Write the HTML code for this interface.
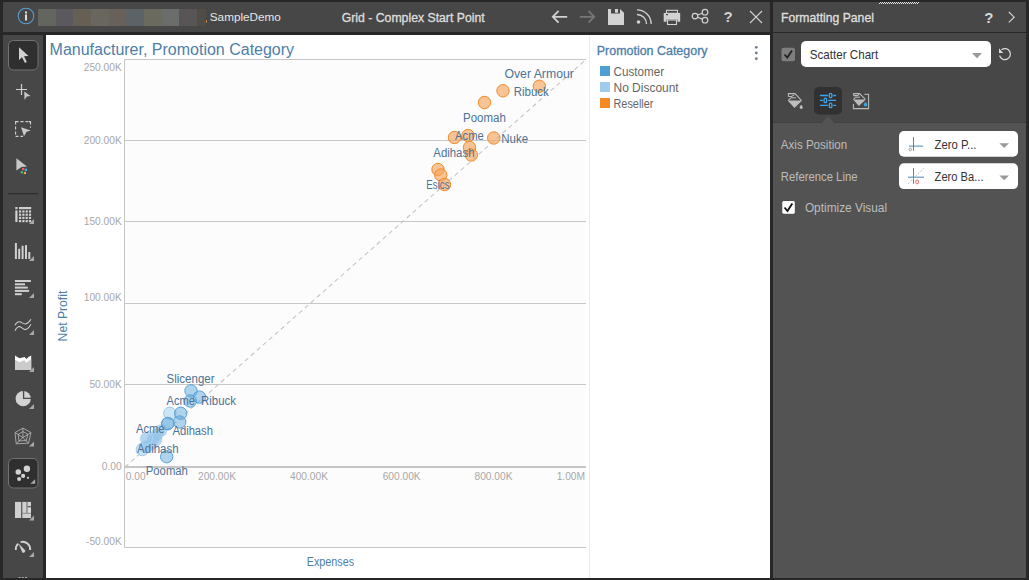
<!DOCTYPE html>
<html>
<head>
<meta charset="utf-8">
<style>
html,body{margin:0;padding:0;}
body{width:1029px;height:580px;overflow:hidden;background:#272727;position:relative;font-family:"Liberation Sans",sans-serif;}
.abs{position:absolute;}
#hdr{left:3px;top:2px;width:767px;height:30px;background:#474747;}
#phdr{left:773px;top:2px;width:253px;height:30px;background:#474747;}
#pbody1{left:773px;top:33px;width:253px;height:90px;background:#474747;}
#pbody2{left:773px;top:123px;width:253px;height:455px;background:#535353;}
#tool{left:3px;top:35px;width:40px;height:543px;background:#474747;}
#content{left:46px;top:35px;width:724px;height:543px;background:#ffffff;}
svg{position:absolute;left:0;top:0;}
</style>
</head>
<body>
<div class="abs" id="hdr"></div>
<div class="abs" id="phdr"></div>
<div class="abs" id="pbody1"></div>
<div class="abs" id="pbody2"></div>
<div class="abs" id="tool"></div>
<div class="abs" id="content"></div>
<svg width="1029" height="580" viewBox="0 0 1029 580" font-family="Liberation Sans, sans-serif">
<!-- ============ HEADER ============ -->
<circle cx="26" cy="16" r="7.8" fill="none" stroke="#5b9fd2" stroke-width="1.05"/>
<rect x="25" y="11.5" width="2" height="2" fill="#e0e0e0"/>
<rect x="25" y="14.5" width="2" height="6" fill="#e0e0e0"/>
<g>
<rect x="38" y="9" width="18" height="17" fill="#63665f"/>
<rect x="56" y="9" width="17" height="17" fill="#5b595d"/>
<rect x="73" y="9" width="18" height="17" fill="#656053"/>
<rect x="91" y="9" width="18" height="17" fill="#69665f"/>
<rect x="109" y="9" width="17" height="17" fill="#67615a"/>
<rect x="126" y="9" width="18" height="17" fill="#5b6366"/>
<rect x="144" y="9" width="18" height="17" fill="#6a6a5e"/>
<rect x="162" y="9" width="17" height="17" fill="#6b6d6b"/>
<rect x="179" y="9" width="18" height="17" fill="#595455"/>
<rect x="197" y="9" width="9" height="17" fill="#504c46"/>
<rect x="206" y="20" width="1" height="1" fill="#c8553a"/><rect x="206" y="21" width="1" height="1.3" fill="#d8b43a"/>
</g>
<text x="209.8" y="20.9" font-size="11.7" fill="#e6e6e6" textLength="71" lengthAdjust="spacingAndGlyphs">SampleDemo</text>
<text x="341.7" y="22" font-size="12.5" fill="#dcdcdc" stroke="#dcdcdc" stroke-width="0.35" textLength="143" lengthAdjust="spacingAndGlyphs">Grid - Complex Start Point</text>

<!-- back arrow -->
<path d="M552.8 16.8 H567.2 M558.6 10.9 L552.8 16.8 L558.6 22.7" fill="none" stroke="#d2d2d2" stroke-width="1.8"/>
<!-- forward arrow -->
<path d="M579.8 16.8 H594.2 M588.4 10.9 L594.2 16.8 L588.4 22.7" fill="none" stroke="#777777" stroke-width="1.8"/>
<!-- save -->
<path d="M608 9 H611 V13.6 H620 V9 L624 12.8 V25 H608 Z" fill="#d2d2d2"/>
<rect x="615" y="9" width="3" height="3.7" fill="#d2d2d2"/>
<!-- rss -->
<circle cx="638.5" cy="22" r="1.8" fill="#d2d2d2"/>
<path d="M637 14.5 A9.5 9.5 0 0 1 646.5 24" fill="none" stroke="#d2d2d2" stroke-width="1.3"/>
<path d="M637 9.8 A14.2 14.2 0 0 1 651.2 24" fill="none" stroke="#d2d2d2" stroke-width="1.3"/>
<!-- print -->
<rect x="666.5" y="10.3" width="11" height="3" fill="none" stroke="#d2d2d2" stroke-width="1.1"/>
<path d="M663.7 13 H680.2 V21.8 H677.5 V19.5 H666.5 V21.8 H663.7 Z" fill="#d2d2d2"/>
<rect x="667.5" y="20" width="9" height="4.5" fill="none" stroke="#d2d2d2" stroke-width="1.1"/>
<rect x="666" y="14" width="2" height="1.2" fill="#474747"/>
<!-- share -->
<g fill="none" stroke="#d2d2d2" stroke-width="1.2">
<circle cx="695" cy="16.1" r="2.8"/>
<circle cx="705" cy="12.2" r="2.8"/>
<circle cx="705" cy="20.2" r="2.8"/>
<path d="M697.6 15 L702.4 13.2 M697.6 17.2 L702.4 19.1"/>
</g>
<!-- help -->
<text x="723.6" y="22.2" font-size="15" font-weight="bold" fill="#d2d2d2">?</text>
<!-- close -->
<path d="M750 11 L762 23 M762 11 L750 23" stroke="#d2d2d2" stroke-width="1.1" fill="none"/>

<!-- ============ PANEL HEADER ============ -->
<text x="781.1" y="22.1" font-size="13" fill="#dedede" stroke="#dedede" stroke-width="0.35" textLength="92.8" lengthAdjust="spacingAndGlyphs">Formatting Panel</text>
<text x="984.3" y="23.1" font-size="15" font-weight="bold" fill="#d8d8d8">?</text>
<path d="M1008.8 12 L1014.2 17.2 L1008.8 22.4" fill="none" stroke="#d8d8d8" stroke-width="1.1"/>
<!-- zigzag -->
<g fill="#e8e8e8">
<rect x="879" y="2" width="40" height="1" fill="url(#zz1)"/>
<rect x="879" y="3" width="40" height="1" fill="url(#zz2)"/>
</g>
<defs>
<pattern id="zz1" width="2" height="1" patternUnits="userSpaceOnUse"><rect x="0" y="0" width="1" height="1" fill="#e8e8e8"/></pattern>
<pattern id="zz2" width="2" height="1" patternUnits="userSpaceOnUse"><rect x="1" y="0" width="1" height="1" fill="#e8e8e8"/></pattern>
</defs>

<!-- ============ PANEL BODY ============ -->
<rect x="781.5" y="47.7" width="13.5" height="13.5" rx="2" fill="#7e7e7e"/>
<path d="M784.5 54.5 L787.3 57.5 L792 50.5" fill="none" stroke="#222" stroke-width="1.8"/>
<rect x="801" y="41" width="190" height="26" rx="5" fill="#ffffff"/>
<text x="809.8" y="58.6" font-size="12.6" fill="#333333" textLength="68.4" lengthAdjust="spacingAndGlyphs">Scatter Chart</text>
<path d="M972 53 H982 L977 58.2 Z" fill="#999999"/>
<!-- refresh -->
<path d="M999.6 55.6 A5.5 5.5 0 1 0 1001.6 49.7" fill="none" stroke="#d8d8d8" stroke-width="1.3"/>
<path d="M999 48.3 L999 52.9 L1003.2 52.9 Z" fill="#d8d8d8"/>

<!-- tabs -->
<rect x="814" y="87" width="28" height="27.5" rx="5" fill="#313131"/>
<path d="M822 123 L828 116.3 L834 123 Z" fill="#535353"/>
<rect x="773" y="122" width="253" height="1" fill="#414141"/>
<path d="M821.5 123.2 L828 116.3 L834.5 123.2 Z" fill="#535353"/>
<!-- sliders icon -->
<g stroke="#41a5ee" stroke-width="1.3" fill="none">
<path d="M819.9 95.5 H827.9 M833.3 95.5 H836.1"/>
<path d="M819.9 100.4 H822.8 M828.2 100.4 H836.1"/>
<path d="M819.9 105.4 H827.9 M833.3 105.4 H836.1"/>
<rect x="829.3" y="93.4" width="2.6" height="4.3" rx="1.2"/>
<rect x="824.1" y="98.2" width="2.6" height="4.4" rx="1.2"/>
<rect x="829.3" y="103.2" width="2.6" height="4.5" rx="1.2"/>
</g>
<!-- paint bucket icon 1 -->
<g fill="none" stroke="#bdbdbd" stroke-width="1.05">
<path d="M788.4 96.4 V93.6 H795 L801.6 100.6"/>
<path d="M788.4 96.4 H791.5 L794.3 94.9"/>
<path d="M791 97.8 H795.8"/>
<path d="M790.9 97.8 L788.2 100.6"/>
</g>
<path d="M787.6 100.6 H802.1 L794.5 108.1 Z" fill="#bdbdbd"/>
<path d="M801.2 104.8 C800.2 106 799.6 106.6 799.6 107.3 A1.6 1.6 0 0 0 802.8 107.3 C802.8 106.6 802.2 106 801.2 104.8 Z" fill="#bdbdbd"/>
<!-- paint bucket icon 2 -->
<g fill="none" stroke="#bdbdbd" stroke-width="1.05">
<path d="M853.6 95.6 V93.6 H859.6 L865.4 99.3"/>
<path d="M853.6 95.6 H857 L859.2 94.5"/>
<path d="M855.5 97.2 H860"/>
<path d="M855.5 97.2 L853.4 99.5"/>
<path d="M864.4 94.3 H868.6 V108.6 H853.4 V104.1"/>
</g>
<path d="M853.1 99.6 H865.8 L858.8 106 Z" fill="#bdbdbd"/>
<path d="M865.5 101.9 C864.4 103.2 863.8 103.9 863.8 104.7 A1.75 1.75 0 0 0 867.3 104.7 C867.3 103.9 866.6 103.2 865.5 101.9 Z" fill="#3ea3ea"/>

<!-- rows -->
<text x="780.8" y="148.8" font-size="12.5" fill="#bdbdbd" textLength="66.3" lengthAdjust="spacingAndGlyphs">Axis Position</text>
<text x="780.8" y="181" font-size="12.5" fill="#bdbdbd" textLength="76.7" lengthAdjust="spacingAndGlyphs">Reference Line</text>
<rect x="899" y="131" width="119" height="25.7" rx="5" fill="#ffffff"/>
<rect x="899" y="163.3" width="119" height="25.8" rx="5" fill="#ffffff"/>
<text x="934.6" y="148.8" font-size="12.5" fill="#333333" textLength="41.9" lengthAdjust="spacingAndGlyphs">Zero P...</text>
<text x="934.6" y="180.5" font-size="12.5" fill="#333333" textLength="48.9" lengthAdjust="spacingAndGlyphs">Zero Ba...</text>
<path d="M999.4 143.2 H1009 L1004.2 148.1 Z" fill="#999999"/>
<path d="M999.4 175.4 H1009 L1004.2 180.3 Z" fill="#999999"/>
<g stroke="#4f85b0" stroke-width="1" fill="none">
<path d="M913.5 137.2 V150.8 M908.9 146.1 H923.1"/>
<path d="M913.5 168 V183.8 M908 177.2 H924"/>
</g>
<circle cx="910.3" cy="149.5" r="1.3" fill="none" stroke="#888" stroke-width="0.8"/>
<path d="M908 184 L924 168" stroke="#bbbbbb" stroke-width="0.9" stroke-dasharray="2 1.5"/>
<rect x="915.8" y="180.1" width="2.6" height="3.6" rx="1" fill="none" stroke="#e54545" stroke-width="0.8"/>

<rect x="781.8" y="200.5" width="13.5" height="13.8" rx="2" fill="#ffffff" stroke="#333" stroke-width="0.8"/>
<path d="M784.5 207.5 L787.5 211 L792.3 203.5" fill="none" stroke="#111" stroke-width="1.8"/>
<text x="804.9" y="212.1" font-size="12.5" fill="#bdbdbd" textLength="82.2" lengthAdjust="spacingAndGlyphs">Optimize Visual</text>


<!-- ============ CHART ============ -->
<text x="49.6" y="55" font-size="16" fill="#4d7ea8" textLength="244.5" lengthAdjust="spacingAndGlyphs">Manufacturer, Promotion Category</text>
<rect x="125" y="60" width="461" height="487" fill="#fcfcfc"/>
<path d="M586 59.5 H124.5 V547.5 H586" fill="none" stroke="#c6c6c6" stroke-width="1"/>
<g stroke="#c8c8c8" stroke-width="1">
<path d="M125 140.5 H586 M125 221.5 H586 M125 303.5 H586 M125 384.5 H586"/>
</g>
<rect x="125" y="466" width="461" height="2" fill="#c6c6c6"/>
<path d="M125 467 L585.5 60" stroke="#c4c4c4" stroke-width="1.05" stroke-dasharray="4.5 3.5" fill="none"/>
<g font-size="10.2" fill="#a8a8a8" text-anchor="end">
<text x="121.7" y="71">250.00K</text>
<text x="121.7" y="143.8">200.00K</text>
<text x="121.7" y="224.8">150.00K</text>
<text x="121.7" y="301">100.00K</text>
<text x="121.7" y="388">50.00K</text>
<text x="121.7" y="470.1">0.00</text>
<text x="121.7" y="544.8">-50.00K</text>
</g>
<g font-size="10.2" fill="#a8a8a8" text-anchor="middle">
<text x="125.8" y="479.8" text-anchor="start">0.00</text>
<text x="217" y="479.8">200.00K</text>
<text x="309" y="479.8">400.00K</text>
<text x="401.7" y="479.8">600.00K</text>
<text x="493.5" y="479.8">800.00K</text>
<text x="585" y="479.8" text-anchor="end">1.00M</text>
</g>
<text x="306.7" y="566" font-size="12" fill="#4d7ea8" textLength="47.5" lengthAdjust="spacingAndGlyphs">Expenses</text>
<text transform="translate(67.1 341.4) rotate(-90)" x="0" y="0" font-size="12.5" fill="#4d7ea8" textLength="50.7" lengthAdjust="spacingAndGlyphs">Net Profit</text>
<line x1="589.5" y1="35" x2="589.5" y2="578" stroke="#ececec" stroke-width="1"/>

<!-- orange points -->
<g fill="#f6a65f" fill-opacity="0.65" stroke="#f18b2a" stroke-width="1">
<circle cx="539.3" cy="86.3" r="6.2"/>
<circle cx="503" cy="90.8" r="6.2"/>
<circle cx="484.5" cy="102.5" r="6.2"/>
<circle cx="454.5" cy="137.5" r="6.2"/>
<circle cx="468" cy="135.5" r="6.2"/>
<circle cx="493.8" cy="138" r="6.2"/>
<circle cx="469.5" cy="147.5" r="6.2"/>
<circle cx="471.3" cy="155" r="6.2"/>
<circle cx="438" cy="169.5" r="6.2"/>
<circle cx="440.8" cy="175" r="6.2"/>
<circle cx="444.5" cy="184.5" r="6.2"/>
</g>
<!-- blue points -->
<g fill="#a6d0ee" fill-opacity="0.55" stroke="#9cc9ea" stroke-width="1">
<circle cx="169.8" cy="413.3" r="6.2"/>
<circle cx="142.4" cy="449.5" r="6.2"/>
</g>
<g fill="#94c5ea" fill-opacity="0.7" stroke="none">
<circle cx="161" cy="430.5" r="6.2"/>
<circle cx="157" cy="434.5" r="6.2"/>
<circle cx="153.3" cy="438.6" r="6.2"/>
<circle cx="146.5" cy="438.5" r="6.2"/>
<circle cx="156" cy="440" r="6.2"/>
<circle cx="150" cy="445" r="6.2"/>
<circle cx="145" cy="447" r="6.2"/>
</g>
<g fill="none" stroke="#b3d6f0" stroke-width="0.8">
<circle cx="146.5" cy="438.5" r="6.2"/>
</g>
<g fill="#62aadb" fill-opacity="0.5" stroke="#5aa3d6" stroke-width="1">
<circle cx="191" cy="390.9" r="6.2"/>
<circle cx="199.5" cy="397.1" r="6.2"/>
<circle cx="190.2" cy="401" r="6.2"/>
<circle cx="180.7" cy="413.3" r="6.2"/>
<circle cx="179.7" cy="422" r="6.2"/>
<circle cx="167.8" cy="423.6" r="6.2"/>
<circle cx="167.8" cy="423.6" r="6.2" fill-opacity="0.3"/>
<circle cx="166.7" cy="456.7" r="6.2"/>
</g>
<!-- labels -->
<g font-size="12" fill="#4e7294" lengthAdjust="spacingAndGlyphs">
<text x="504.5" y="78" textLength="69.3" lengthAdjust="spacingAndGlyphs">Over Armour</text>
<text x="513.8" y="95.5" textLength="35" lengthAdjust="spacingAndGlyphs">Ribuck</text>
<text x="463" y="122" textLength="42.8" lengthAdjust="spacingAndGlyphs">Poomah</text>
<text x="455" y="139.5" textLength="28.8" lengthAdjust="spacingAndGlyphs">Acme</text>
<text x="501.3" y="143" textLength="26.7" lengthAdjust="spacingAndGlyphs">Nuke</text>
<text x="433.3" y="157" textLength="41.2" lengthAdjust="spacingAndGlyphs">Adihash</text>
<text x="426.3" y="188.8" textLength="23.2" lengthAdjust="spacingAndGlyphs">Esics</text>
<text x="166.6" y="383.1" textLength="47.9" lengthAdjust="spacingAndGlyphs">Slicenger</text>
<text x="166.6" y="404.8" textLength="28.3" lengthAdjust="spacingAndGlyphs">Acme</text>
<text x="201.1" y="405" textLength="34.9" lengthAdjust="spacingAndGlyphs">Ribuck</text>
<text x="135.9" y="432.8" textLength="28.7" lengthAdjust="spacingAndGlyphs">Acme</text>
<text x="172.4" y="434.7" textLength="40.6" lengthAdjust="spacingAndGlyphs">Adihash</text>
<text x="137.1" y="452.7" textLength="41.5" lengthAdjust="spacingAndGlyphs">Adihash</text>
<text x="145.8" y="475.4" textLength="42.1" lengthAdjust="spacingAndGlyphs">Poomah</text>
</g>

<!-- legend -->
<text x="596.8" y="55.2" font-size="12" fill="#4d7ea8" stroke="#4d7ea8" stroke-width="0.3" textLength="110.7" lengthAdjust="spacingAndGlyphs">Promotion Category</text>
<g fill="#6c7e92">
<circle cx="756.3" cy="47.3" r="1.4"/>
<circle cx="756.3" cy="53" r="1.4"/>
<circle cx="756.3" cy="58.7" r="1.4"/>
</g>
<rect x="600" y="66" width="10" height="10" fill="#4d9fd2"/>
<rect x="600" y="82" width="10" height="10" fill="#9fcbec"/>
<rect x="600" y="98" width="10" height="10" fill="#f58a24"/>
<g font-size="12" fill="#666666">
<text x="613.5" y="76" textLength="50.6" lengthAdjust="spacingAndGlyphs">Customer</text>
<text x="613.5" y="92" textLength="65.2" lengthAdjust="spacingAndGlyphs">No Discount</text>
<text x="613.5" y="108" textLength="39.9" lengthAdjust="spacingAndGlyphs">Reseller</text>
</g>

<!-- ============ TOOLBAR ============ -->
<rect x="8.5" y="40.5" width="29.5" height="29.5" rx="5" fill="#2f2f2f" stroke="#727272" stroke-width="1"/>
<path d="M19 47.3 V60 L22 57.3 L25 63 L26.8 62 L24 56.3 L28.5 56 Z" fill="#d0d0d0"/>


<!-- add -->
<path d="M21.5 84 V95 M16 89.5 H27" stroke="#d0d0d0" stroke-width="1.2" fill="none"/>
<path d="M24.2 91.5 L30.6 96 L26.8 96.6 L24.6 100 Z" fill="#c8c8c8"/>
<!-- dashed select -->
<path d="M15.6 124.5 V121.6 H18.5 M20.5 121.6 H23.5 M25.5 121.6 H28 M30.5 121.6 H30.5 V124.5 M15.6 126.5 V129.5 M15.6 131.5 V134.5 M15.6 136.4 H18.5 M20.5 136.4 H23 M30.5 126.5 V127.8" fill="none" stroke="#d0d0d0" stroke-width="1.1"/>
<path d="M30.5 121.6 H28.5 M30.5 121.6 V124" fill="none" stroke="#d0d0d0" stroke-width="1.1"/>
<path d="M21 127.3 L30.7 130.5 L26.6 131.8 L24 136.3 Z" fill="#c8c8c8"/>
<!-- color cursor -->
<path d="M16.4 158.3 L27 166.5 L21.5 167 L16.4 170.6 Z" fill="#c8c8c8"/>
<rect x="22" y="168" width="2.2" height="2.2" fill="#f0605a"/>
<rect x="24.8" y="168.7" width="2.2" height="2.2" fill="#4ab3f0"/>
<rect x="20.7" y="171.1" width="2.2" height="2.2" fill="#2fc889"/>
<rect x="23.8" y="171.9" width="2.2" height="2.2" fill="#f5a84a"/>
<!-- separator -->
<rect x="8" y="193" width="30" height="1.2" fill="#2c2c2c"/>
<!-- grid icon -->
<g fill="#d0d0d0">
<rect x="15.3" y="207" width="2.2" height="2.2"/>
<rect x="19" y="207" width="12.2" height="2.2"/>
<rect x="15.3" y="210.4" width="2.2" height="11.6"/>
<rect x="19" y="210.4" width="2.2" height="2.2"/><rect x="22.3" y="210.4" width="2.2" height="2.2"/><rect x="25.6" y="210.4" width="2.2" height="2.2"/><rect x="28.9" y="210.4" width="2.2" height="2.2"/>
<rect x="19" y="213.6" width="2.2" height="2.2"/><rect x="22.3" y="213.6" width="2.2" height="2.2"/><rect x="25.6" y="213.6" width="2.2" height="2.2"/><rect x="28.9" y="213.6" width="2.2" height="2.2"/>
<rect x="19" y="216.8" width="2.2" height="2.2"/><rect x="22.3" y="216.8" width="2.2" height="2.2"/><rect x="25.6" y="216.8" width="2.2" height="2.2"/><rect x="28.9" y="216.8" width="2.2" height="2.2"/>
<rect x="19" y="220" width="2.2" height="2.2"/><rect x="22.3" y="220" width="2.2" height="2.2"/><rect x="25.6" y="220" width="2.2" height="2.2"/><rect x="28.9" y="220" width="2.2" height="2.2"/>
</g>
<path d="M34 219 V224 H29 Z" fill="#a8a8a8"/>
<!-- bar icon -->
<g fill="#d0d0d0">
<rect x="14.9" y="243" width="2" height="16"/>
<rect x="18.2" y="248.8" width="2" height="10.2"/>
<rect x="21.6" y="245.8" width="2" height="13.2"/>
<rect x="25" y="245.1" width="2" height="13.9"/>
<rect x="28.3" y="252" width="2" height="7"/>
</g>
<path d="M34 256 V261 H29 Z" fill="#a8a8a8"/>
<!-- hbar icon -->
<g fill="#d0d0d0">
<rect x="14.9" y="280" width="16" height="2"/>
<rect x="14.9" y="283.3" width="10.1" height="2"/>
<rect x="14.9" y="286.6" width="12.9" height="2"/>
<rect x="14.9" y="289.9" width="14.2" height="2"/>
<rect x="14.9" y="293.2" width="6.9" height="2"/>
</g>
<path d="M34 293 V298 H29 Z" fill="#a8a8a8"/>
<!-- line icon -->
<g fill="none" stroke="#d0d0d0" stroke-width="1.05">
<path d="M15 325.2 C16.5 322.5 18 321.5 19.5 321.8 C21.5 322.2 23.5 324.2 25.4 323.9 C27.8 323.5 29.5 321.5 31 319.2"/>
<path d="M15 330.7 C16.5 327.5 18 326.5 19.5 326.5 C21.5 326.8 23.5 329.8 25.4 329.6 C27.8 329.3 29.5 326.8 31 324.3"/>
</g>
<path d="M34 330 V335 H29 Z" fill="#a8a8a8"/>
<!-- area icon -->
<path d="M15 355.5 L19.5 358.3 L22.5 357.5 L24.5 357 L26.5 359 L28.5 357 L31.2 355.5 V369.9 H15 Z" fill="#ffffff"/>
<path d="M15 359.8 L19.5 362.3 L22.5 360.8 L24.5 360.2 L26.5 362.8 L28.5 361 L31.2 359.3 V369.9 H15 Z" fill="#cbcbcb"/>
<path d="M34 367 V372 H29 Z" fill="#a8a8a8"/>
<!-- pie icon -->
<circle cx="23.2" cy="398.7" r="7.6" fill="#d2d2d2"/>
<path d="M23.6 390.5 V398.4 H31.5" fill="none" stroke="#474747" stroke-width="1.3"/>
<path d="M34 404 V409 H29 Z" fill="#a8a8a8"/>
<!-- radar icon -->
<g fill="none" stroke="#b4b4b4" stroke-width="0.85">
<path d="M22.9 428.1 L31 432.6 L28.5 443.2 L16.2 443.8 L15 432.6 Z"/>
<path d="M22.9 431.5 L27.8 434.3 L26.3 440.6 L18.9 440.9 L18.2 434.3 Z"/>
<path d="M22.9 428.1 L22.9 437.5 M31 432.6 L22.9 437.5 M28.5 443.2 L22.9 437.5 M16.2 443.8 L22.9 437.5 M15 432.6 L22.9 437.5"/>
</g>
<path d="M34 441.4 V446.4 H29 Z" fill="#a8a8a8"/>
<!-- scatter selected -->
<rect x="8.5" y="458.5" width="29.5" height="29.5" rx="5" fill="#2f2f2f" stroke="#727272" stroke-width="1"/>
<g fill="#d2d2d2">
<circle cx="26.9" cy="468.8" r="3.2"/>
<circle cx="18.3" cy="472" r="2.8"/>
<circle cx="23.1" cy="475.9" r="2.1"/>
<circle cx="19.1" cy="479.1" r="2"/>
<circle cx="28" cy="477.8" r="1.1"/>
</g>
<path d="M35.2 479.3 V483.8 H30.2 Z" fill="#a8a8a8"/>
<!-- treemap icon -->
<g fill="#d0d0d0">
<rect x="15" y="501.9" width="6.2" height="16.1"/>
<rect x="22.3" y="501.9" width="3.9" height="11"/>
<rect x="27.4" y="501.9" width="3.6" height="4.3"/>
<rect x="27.4" y="507.3" width="3.6" height="5.6" fill="#dadada"/>
<rect x="22.3" y="513.6" width="8.7" height="4.4"/>
<rect x="22.3" y="512.9" width="8.7" height="0.7" fill="#b0b0b0"/>
<rect x="26.2" y="501.9" width="1.2" height="11" fill="#a8a8a8"/>
</g>
<path d="M34 515.6 V520.6 H29 Z" fill="#a8a8a8"/>
<!-- gauge icon -->
<path d="M15.8 550 A7.6 7.6 0 0 1 18.3 543.6" fill="none" stroke="#d0d0d0" stroke-width="1.9"/>
<path d="M20.6 542.1 A7.6 7.6 0 0 1 30.2 550" fill="none" stroke="#d0d0d0" stroke-width="1.9"/>
<path d="M18.6 543.4 L25.3 550.6 A1.9 1.9 0 0 1 22.3 552.4 Z" fill="#d0d0d0"/>
<path d="M34 552 V557 H29 Z" fill="#a8a8a8"/>
<g fill="#aaaaaa">
<rect x="18.7" y="577" width="2" height="1"/><rect x="21.8" y="577" width="2" height="1"/><rect x="25" y="577" width="2" height="1"/>
</g>

</svg>
</body>
</html>
